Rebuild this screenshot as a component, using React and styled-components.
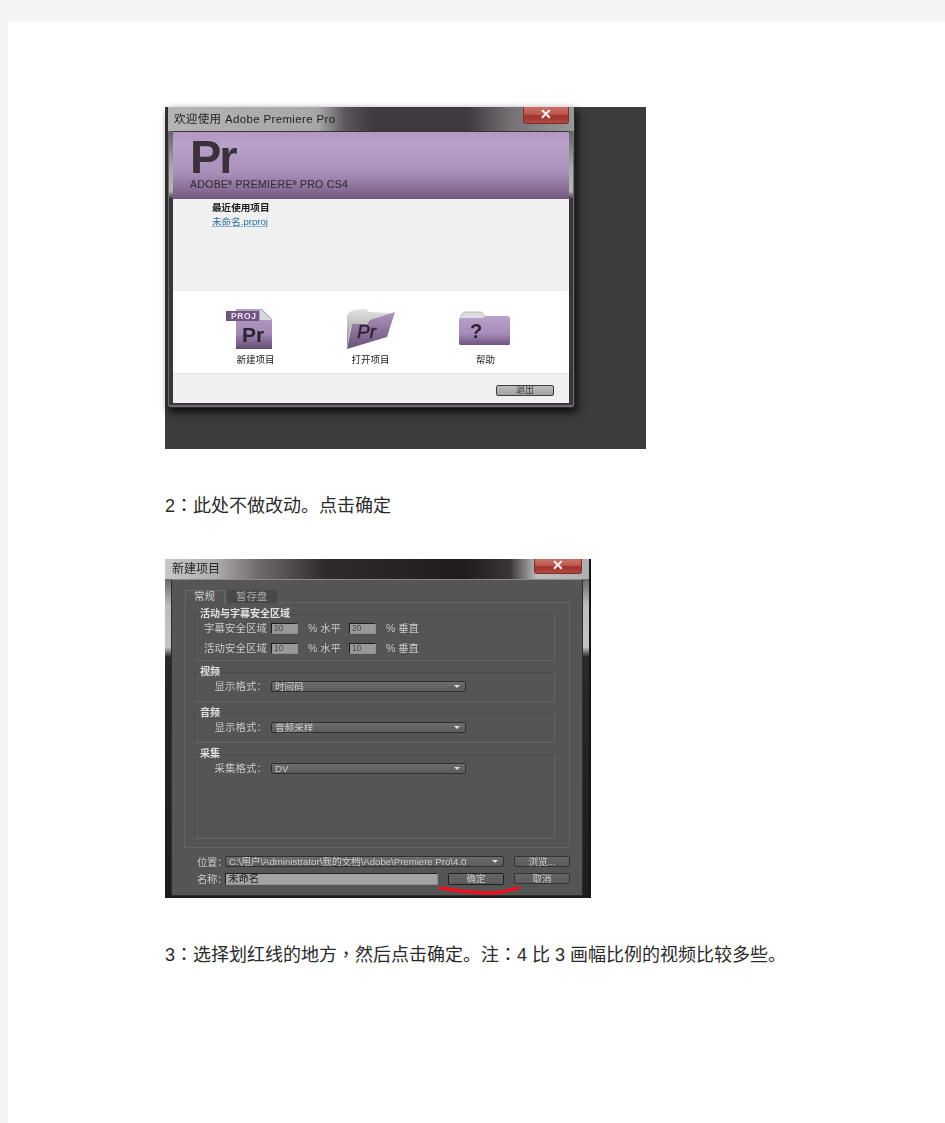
import styled, { createGlobalStyle } from "styled-components";

const FONT = `"Liberation Sans", "Noto Sans CJK SC", sans-serif`;

const Global = createGlobalStyle`
    html, body {
        margin: 0;
        background: #f4f4f4;
    }
`;

function NewProjectIcon () {
    return (
        <svg width="48" height="42" viewBox="0 0 48 42">
            <defs>
                <linearGradient id="docFill" x1="0" y1="0" x2="0" y2="1">
                    <stop offset="0" stopColor="#b7a0c8" />
                    <stop offset="0.6" stopColor="#a389b6" />
                    <stop offset="1" stopColor="#654d75" />
                </linearGradient>
            </defs>
            <path d="M11 1H37L47 11V41H11Z" fill="url(#docFill)" />
            <path d="M35 1L47 12H35Z" fill="#d9d9dc" />
            <path d="M1 3H34V13H1Z" fill="#6e5680" />
            <text x="6" y="11" fontFamily="Liberation Sans" fontWeight="700" fontSize="8.5" letterSpacing="0.6" fill="#e8e2ec">PROJ</text>
            <text x="17" y="34" fontFamily="Liberation Sans" fontWeight="700" fontSize="21" fill="#2b2430">Pr</text>
        </svg>
    );
};

function OpenFolderIcon () {
    return (
        <svg width="50" height="42" viewBox="0 0 50 42">
            <defs>
                <linearGradient id="paperFill" x1="0" y1="0" x2="0" y2="1">
                    <stop offset="0" stopColor="#e2e2e2" />
                    <stop offset="1" stopColor="#8d8d8d" />
                </linearGradient>
                <linearGradient id="openFill" x1="0" y1="0" x2="0" y2="1">
                    <stop offset="0" stopColor="#ae95c0" />
                    <stop offset="1" stopColor="#6a5179" />
                </linearGradient>
            </defs>
            <path d="M1 8C3 3 7 1 20 1L23 4L44 5L42 12L5 18L1 40Z" fill="url(#paperFill)" />
            <path d="M6 16H21L24 12L49 4L41 29L1 41Z" fill="url(#openFill)" />
            <text x="11" y="30" fontFamily="Liberation Sans" fontWeight="400" fontStyle="italic" fontSize="19" stroke="#2b2430" strokeWidth="0.4" fill="#2b2430">Pr</text>
        </svg>
    );
};

function HelpFolderIcon () {
    return (
        <svg width="52" height="36" viewBox="0 0 52 36">
            <defs>
                <linearGradient id="helpFill" x1="0" y1="0" x2="0" y2="1">
                    <stop offset="0" stopColor="#b8a1c9" />
                    <stop offset="0.6" stopColor="#a78dba" />
                    <stop offset="1" stopColor="#6c5380" />
                </linearGradient>
            </defs>
            <path d="M0 12C1 5 3 1 6 1H22C24 1 25 5 27 6V12Z" fill="#dcdcdc" stroke="#9a9a9a" strokeWidth="0.6" />
            <path d="M0 10C0 8 1 7 3 7H24L26 5H48C50 5 51 6 51 8V32C51 34 50 34 48 34H3C1 34 0 34 0 32Z" fill="url(#helpFill)" />
            <text x="11" y="27" fontFamily="Liberation Sans" fontWeight="700" fontSize="20" fill="#2b2430">?</text>
        </svg>
    );
};

const LAUNCH_ITEMS = [
    { label: "新建项目", shift: 14, top: 0, icon: <NewProjectIcon /> },
    { label: "打开项目", shift: 0, top: 0, icon: <OpenFolderIcon /> },
    { label: "帮助", shift: 2, top: 3, icon: <HelpFolderIcon /> },
];

function Dropdown ({ value, width }) {
    return (
        <Select $width={width}>
            <span>{value}</span>
            <Arrow />
        </Select>
    );
};

export default function App () {
    return (
        <>
            <Global />
            <Paper>
                <WelcomeShot>
                    <WelcomeWindow>
                        <WelcomeTitle>
                            <WelcomeTitleText>欢迎使用 Adobe Premiere Pro</WelcomeTitleText>
                            <CloseButton>✕</CloseButton>
                        </WelcomeTitle>
                        <Banner>
                            <Logo>Pr</Logo>
                            <Product>ADOBE<Mark>®</Mark> PREMIERE<Mark>®</Mark> PRO CS4</Product>
                        </Banner>
                        <Recent>
                            <RecentTitle>最近使用项目</RecentTitle>
                            <RecentLink>未命名.prproj</RecentLink>
                        </Recent>
                        <Launch>
                            {LAUNCH_ITEMS.map((item) => (
                                <LaunchItem key={item.label}>
                                    <LaunchIcon $shift={item.shift} $top={item.top}>{item.icon}</LaunchIcon>
                                    <span>{item.label}</span>
                                </LaunchItem>
                            ))}
                        </Launch>
                        <WelcomeFooter>
                            <ExitButton>退出</ExitButton>
                        </WelcomeFooter>
                    </WelcomeWindow>
                </WelcomeShot>

                <Caption>2<Punct>：</Punct>此处不做改动。点击确定</Caption>

                <ProjectShot>
                    <ProjectTitle>
                        <ProjectTitleText>新建项目</ProjectTitleText>
                        <CloseButton $wide>✕</CloseButton>
                    </ProjectTitle>
                    <Panel>
                        <Tabs>
                            <Tab $active>常规</Tab>
                            <Tab>暂存盘</Tab>
                        </Tabs>
                        <TabBody>
                            <Group $height={52}>
                                <GroupTitle>活动与字幕安全区域</GroupTitle>
                                <Row>
                                    <FieldLabel>字幕安全区域</FieldLabel>
                                    <NumberBox>20</NumberBox>
                                    <Unit>% 水平</Unit>
                                    <NumberBox>20</NumberBox>
                                    <Unit>% 垂直</Unit>
                                </Row>
                                <Row>
                                    <FieldLabel>活动安全区域</FieldLabel>
                                    <NumberBox>10</NumberBox>
                                    <Unit>% 水平</Unit>
                                    <NumberBox>10</NumberBox>
                                    <Unit>% 垂直</Unit>
                                </Row>
                            </Group>
                            <Group $height={35}>
                                <GroupTitle>视频</GroupTitle>
                                <Row>
                                    <FieldLabel>显示格式：</FieldLabel>
                                    <Dropdown value="时间码" width={195} />
                                </Row>
                            </Group>
                            <Group $height={35}>
                                <GroupTitle>音频</GroupTitle>
                                <Row>
                                    <FieldLabel>显示格式：</FieldLabel>
                                    <Dropdown value="音频采样" width={195} />
                                </Row>
                            </Group>
                            <Group $height={90}>
                                <GroupTitle>采集</GroupTitle>
                                <Row>
                                    <FieldLabel>采集格式：</FieldLabel>
                                    <Dropdown value="DV" width={195} />
                                </Row>
                            </Group>
                        </TabBody>
                        <Footer>
                            <FooterRow>
                                <FooterLabel>位置：</FooterLabel>
                                <Dropdown value="C:\用户\Administrator\我的文档\Adobe\Premiere Pro\4.0" width={279} />
                                <DialogButton>浏览...</DialogButton>
                            </FooterRow>
                            <FooterRow>
                                <FooterLabel>名称：</FooterLabel>
                                <NameBox>未命名</NameBox>
                                <DialogButton $primary>确定</DialogButton>
                                <DialogButton>取消</DialogButton>
                                <RedMark width="84" height="12" viewBox="0 0 84 12">
                                    <path d="M3 3C20 6 36 8 54 8C64 8 72 5 80 3" fill="none" stroke="#ea0f1a" strokeWidth="3.5" strokeLinecap="round" />
                                </RedMark>
                            </FooterRow>
                        </Footer>
                    </Panel>
                </ProjectShot>

                <Caption>3<Punct>：</Punct>选择划红线的地方<Punct>，</Punct>然后点击确定。注<Punct>：</Punct>4 比 3 画幅比例的视频比较多些。</Caption>
            </Paper>
        </>
    );
};

const Paper = styled.div`
    box-sizing: border-box;
    min-height: 1101px;
    margin: 22px 0 0 8px;
    padding: 85px 0 0 157px;
    background: #ffffff;
    font-family: ${FONT};
`;

const Caption = styled.p`
    margin: 41px 0;
    height: 28px;
    font-family: "Liberation Sans", "Noto Sans CJK SC", sans-serif;
    font-size: 18px;
    line-height: 28px;
    color: #2a2a2a;
    white-space: nowrap;
`;

const Punct = styled.span`
    font-family: "Noto Sans CJK TC", sans-serif;
`;

const WelcomeShot = styled.div`
    box-sizing: border-box;
    width: 481px;
    height: 342px;
    padding: 0 71px 41px 2px;
    background: #3c3c3c;
    filter: blur(0.4px);
`;

const WelcomeWindow = styled.div`
    box-sizing: border-box;
    display: flex;
    flex-direction: column;
    height: 301px;
    padding: 0 5px 4px;
    border: 1px solid #2a2a2a;
    border-top: 0;
    border-radius: 3px;
    background: linear-gradient(180deg, #3a353a 0, #a8a8a8 60px, #b5b5b5 84px, #3b363b 92px, #3b363b 100%);
    box-shadow: inset 0 -1px 0 1px #6f6a6f, 2px 4px 9px rgba(0, 0, 0, 0.85);
`;

const WelcomeTitle = styled.div`
    display: flex;
    align-items: flex-start;
    justify-content: space-between;
    height: 24px;
    margin: 0 -5px;
    padding: 0 5px 0 6px;
    background: linear-gradient(90deg, #b4b4b4 0, #a8a6a8 150px, #5a555a 178px, #3f3a40 205px, #3f3a40 300px, #777377 345px, #999999 100%);
`;

const WelcomeTitleText = styled.span`
    margin-top: 5px;
    font-size: 11.5px;
    line-height: 14px;
    letter-spacing: 0.35px;
    color: #222222;
`;

const CloseButton = styled.div`
    flex: none;
    width: ${(props) => (props.$wide ? 48 : 46)}px;
    height: ${(props) => (props.$wide ? 15 : 17)}px;
    margin-right: ${(props) => (props.$wide ? 7 : 0)}px;
    border: 1px solid #7d2f2a;
    border-top: 0;
    border-radius: 0 0 3px 3px;
    box-sizing: border-box;
    background: linear-gradient(180deg, #cb7169 0, #bd5850 45%, #a0322b 55%, #b24a42 100%);
    color: #f4f4f4;
    font-size: 14px;
    font-weight: 700;
    line-height: ${(props) => (props.$wide ? 13 : 15)}px;
    text-align: center;
`;

const Banner = styled.div`
    box-sizing: border-box;
    height: 68px;
    padding: 5px 0 0 17px;
    border-top: 1px solid #3a343a;
    background: linear-gradient(180deg, #b298c3 0, #b9a0c9 20%, #a88fb9 62%, #74597f 100%);
`;

const Logo = styled.div`
    font-size: 47px;
    font-weight: 700;
    line-height: 40px;
    letter-spacing: -2px;
    color: #3a3238;
`;

const Product = styled.div`
    font-size: 10.5px;
    line-height: 13px;
    letter-spacing: 0.3px;
    -webkit-text-stroke: 0.2px #3d3340;
    color: #3d3340;
`;

const Mark = styled.span`
    font-size: 5px;
    vertical-align: 3px;
`;

const Recent = styled.div`
    box-sizing: border-box;
    height: 92px;
    padding: 2px 0 0 39px;
    background: #f0f0f0;
    font-size: 9.6px;
    line-height: 14px;
`;

const RecentTitle = styled.div`
    font-weight: 700;
    color: #1c1c1c;
`;

const RecentLink = styled.div`
    color: #2c6f9e;
    text-decoration: underline;
    text-decoration-color: #8fb4cf;
`;

const Launch = styled.div`
    display: grid;
    grid-template-columns: repeat(3, 115px);
    box-sizing: border-box;
    height: 83px;
    padding: 17px 0 0 25px;
    background: #ffffff;
    border-bottom: 1px solid #e3e3e3;
`;

const LaunchItem = styled.div`
    display: flex;
    flex-direction: column;
    align-items: center;
    font-size: 9.5px;
    line-height: 11px;
    color: #222222;
`;

const LaunchIcon = styled.div`
    box-sizing: border-box;
    display: flex;
    align-items: flex-start;
    height: 46px;
    padding-top: ${(props) => props.$top}px;
    margin-right: ${(props) => props.$shift}px;
`;

const WelcomeFooter = styled.div`
    flex: 1;
    display: flex;
    justify-content: flex-end;
    padding: 11px 15px 0 0;
    background: #f0f0f0;
`;

const ExitButton = styled.div`
    box-sizing: border-box;
    width: 58px;
    height: 11px;
    border: 1px solid #3e3e3e;
    border-radius: 2px;
    background: linear-gradient(180deg, #bdbdbd, #a2a2a2);
    color: #3a3a3a;
    font-size: 9px;
    line-height: 9px;
    text-align: center;
`;

const ProjectShot = styled.div`
    box-sizing: border-box;
    display: flex;
    flex-direction: column;
    width: 426px;
    height: 339px;
    padding: 0 6px 2px 6px;
    border-right: 2px solid #141414;
    background: linear-gradient(180deg, #2a2528 0, #bcbcbc 46px, #c4c4c4 88px, #2a282a 98px, #1c1c1c 100%);
    filter: blur(0.4px);
`;

const ProjectTitle = styled.div`
    display: flex;
    align-items: flex-start;
    justify-content: space-between;
    flex: none;
    height: 20px;
    margin: 0 -6px;
    padding-left: 7px;
    background: linear-gradient(90deg, #c8c8c8 0, #b0adae 50px, #6e696c 95px, #2e2a2d 160px, #1f1b1e 300px, #3a3538 345px, #bdbdbd 372px, #b0b0b0 100%);
`;

const ProjectTitleText = styled.span`
    margin-top: 3px;
    font-size: 12px;
    line-height: 14px;
    color: #262626;
`;

const Panel = styled.div`
    flex: 1;
    box-sizing: border-box;
    padding: 10px 12px 0;
    border: 1px solid #2e2e2e;
    border-top-color: #8a8a8a;
    background: #555555;
    color: #c9c9c9;
    font-size: 10.4px;
`;

const Tabs = styled.div`
    display: flex;
    gap: 2px;
    height: 12px;
    padding-left: 1px;
`;

const Tab = styled.div`
    width: ${(props) => (props.$active ? 40 : 50)}px;
    height: 13px;
    padding-left: 8px;
    box-sizing: border-box;
    background: ${(props) => (props.$active ? "#555555" : "#484848")};
    border: 1px solid ${(props) => (props.$active ? "#6a6a6a" : "#4a4a4a")};
    border-bottom: 0;
    font-size: 10.4px;
    line-height: 12px;
    position: relative;
    z-index: 1;
    color: ${(props) => (props.$active ? "#cfcfcf" : "#a5a5a5")};
`;

const TabBody = styled.div`
    box-sizing: border-box;
    display: flex;
    flex-direction: column;
    gap: 6px;
    height: 246px;
    padding: 6px 14px 0 9px;
    border: 1px solid #646464;
`;

const Group = styled.fieldset`
    box-sizing: border-box;
    display: block;
    height: ${(props) => props.$height}px;
    margin: 0;
    padding: 0 0 0 9px;
    min-width: 0;
    border: 1px solid #4a4a4a;
    border-right-color: #666666;
    border-bottom-color: #666666;
`;

const GroupTitle = styled.legend`
    margin-left: -4px;
    padding: 0 2px 0 0;
    font-size: 10px;
    font-weight: 700;
    line-height: 10px;
    color: #e0e0e0;
`;

const Row = styled.div`
    display: flex;
    align-items: center;
    height: 11px;
    margin-top: 4px;

    & + & {
        margin-top: 9px;
    }
`;

const FieldLabel = styled.span`
    flex: none;
    width: 63px;
    margin-right: 4px;
    text-align: right;
    white-space: nowrap;
    letter-spacing: 0.1px;
    line-height: 11px;
`;

const NumberBox = styled.div`
    box-sizing: border-box;
    flex: none;
    width: 27px;
    height: 11px;
    padding-left: 2px;
    border: 1px solid #8f8f8f;
    border-top-color: #1e1e1e;
    border-left-color: #1e1e1e;
    background: #999999;
    color: #4a4a4a;
    font-size: 8.5px;
    line-height: 9px;
`;

const Unit = styled.span`
    flex: none;
    width: 51px;
    padding-left: 10px;
    box-sizing: border-box;
    white-space: nowrap;
    line-height: 11px;
`;

const Select = styled.div`
    box-sizing: border-box;
    display: flex;
    align-items: center;
    justify-content: space-between;
    flex: none;
    width: ${(props) => props.$width}px;
    height: 11px;
    padding: 0 5px 0 3px;
    border: 1px solid #303030;
    border-radius: 2px;
    background: linear-gradient(180deg, #6c6c6c, #5c5c5c);
    color: #cccccc;
    font-size: 9.6px;
    line-height: 9px;
    white-space: nowrap;
`;

const Arrow = styled.i`
    width: 0;
    height: 0;
    border: 3px solid transparent;
    border-top: 3px solid #dddddd;
    border-bottom: 0;
`;

const Footer = styled.div`
    display: flex;
    flex-direction: column;
    gap: 6px;
    margin-top: 8px;
`;

const FooterRow = styled.div`
    position: relative;
    display: flex;
    align-items: center;
    gap: 10px;
    height: 11px;
    margin-left: 13px;
`;

const FooterLabel = styled.span`
    flex: none;
    width: 28px;
    margin-right: -10px;
    white-space: nowrap;
    letter-spacing: -0.4px;
`;

const NameBox = styled.div`
    box-sizing: border-box;
    flex: none;
    width: 213px;
    height: 12px;
    padding-left: 2px;
    border: 1px solid #8f8f8f;
    border-top-color: #1e1e1e;
    border-left-color: #1e1e1e;
    background: #a3a3a3;
    color: #1a1a1a;
    font-size: 10.4px;
    line-height: 10px;
`;

const DialogButton = styled.div`
    box-sizing: border-box;
    flex: none;
    width: 56px;
    height: ${(props) => (props.$primary ? 12 : 11)}px;
    border: 1px solid ${(props) => (props.$primary ? "#202020" : "#333333")};
    border-radius: 2px;
    background: linear-gradient(180deg, #666666, #5b5b5b);
    font-size: 9.6px;
    line-height: 10px;
    text-align: center;
`;

const RedMark = styled.svg`
    position: absolute;
    left: 241px;
    top: 12px;
`;
